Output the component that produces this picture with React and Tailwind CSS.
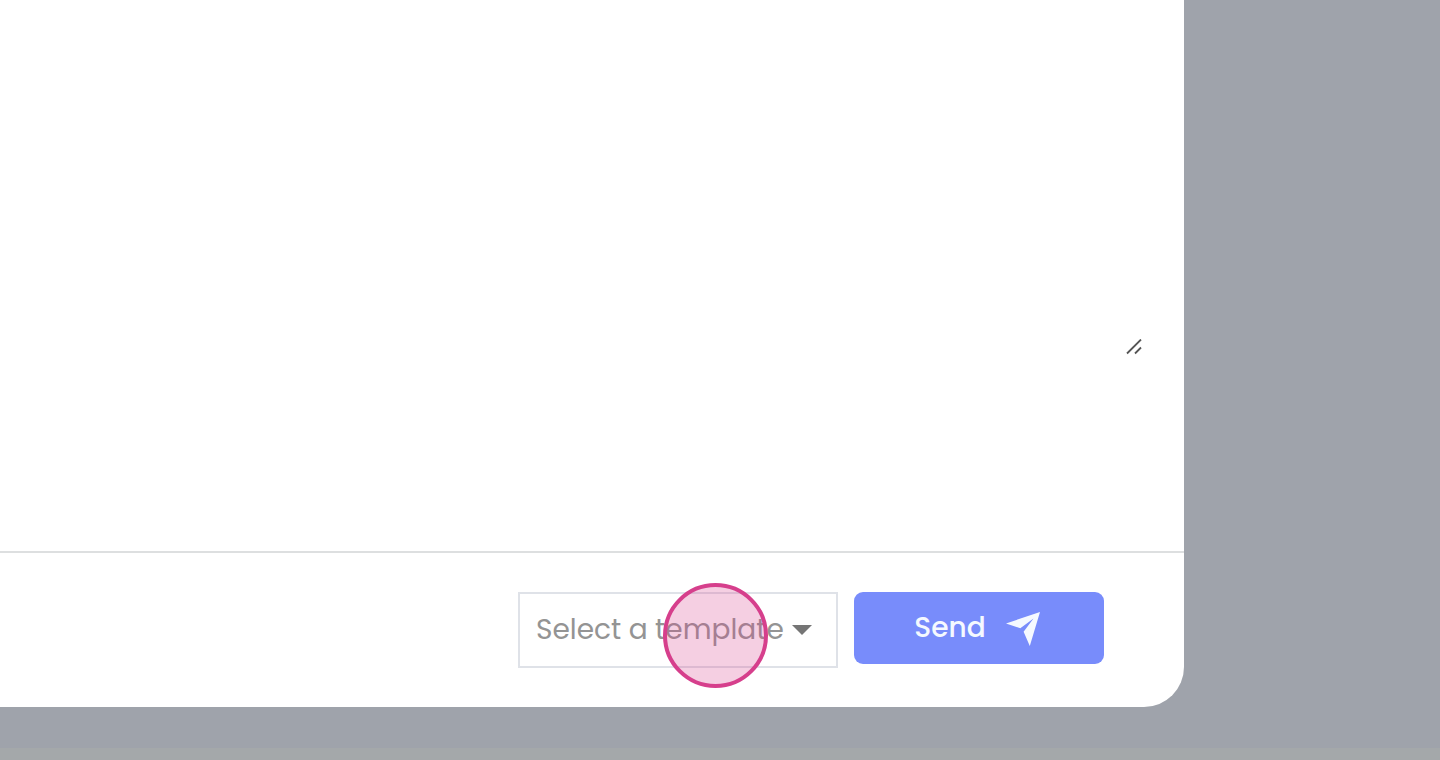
function ResizeGrip() {
  return (
    <svg
      className="pointer-events-none absolute right-0.5 bottom-0.5 size-4"
      viewBox="0 0 16 16"
      fill="none"
      stroke="#555555"
      strokeWidth="1.8"
      aria-hidden="true"
    >
      <path d="M1 14.500 15 0.500M9 14.500l6-6" />
    </svg>
  );
}

function TemplateSelect() {
  return (
    <div className="relative w-80">
      <select
        aria-label="Template"
        defaultValue=""
        className="block h-[76px] w-full appearance-none rounded-none border-2 border-[#dfe2e8] bg-white pl-4 text-[28px] text-[#949494] outline-none"
      >
        <option value="">Select a template</option>
      </select>
      <svg
        className="pointer-events-none absolute top-[33px] right-[26px] h-2.5 w-5"
        viewBox="0 0 20 10"
        fill="#757575"
        aria-hidden="true"
      >
        <path d="M0 0h20L10 10z" />
      </svg>
      <span className="pointer-events-none absolute -top-[9px] left-[145px] size-[105px] rounded-full border-4 border-[#d63f8c] bg-[#d63f8c]/25" />
    </div>
  );
}

function SendButton() {
  return (
    <button
      type="button"
      className="flex h-[72px] w-[250px] items-center justify-center gap-5 rounded-[9px] bg-[#788cfb] pr-1 text-[28px] font-medium text-[#f5f9ff]"
    >
      <span>Send</span>
      <svg className="mt-0.5 size-[34px]" viewBox="0 0 34 34" fill="currentColor" aria-hidden="true">
        <path d="M34 0 0 11.400 14.300 16.200 27.500 6.600 17.600 19.800 23.800 34z" />
      </svg>
    </button>
  );
}

export default function App() {
  return (
    <div className="flex min-h-screen flex-col bg-[#9fa3ab] font-['Poppins','Inter',sans-serif]">
      <main className="mr-64 rounded-br-[40px] bg-white">
        <div className="h-[551px] pr-10">
          <div className="relative">
            <textarea
              aria-label="Message"
              className="block h-[357px] w-full resize-none bg-white p-4 text-[28px] outline-none"
            />
            <ResizeGrip />
          </div>
        </div>
        <footer className="flex items-start justify-end gap-4 border-t-2 border-[#dddfe0] py-[39px] pr-20">
          <TemplateSelect />
          <SendButton />
        </footer>
      </main>
      <div className="mt-auto h-3 bg-[#a4a8aa]" />
    </div>
  );
}
